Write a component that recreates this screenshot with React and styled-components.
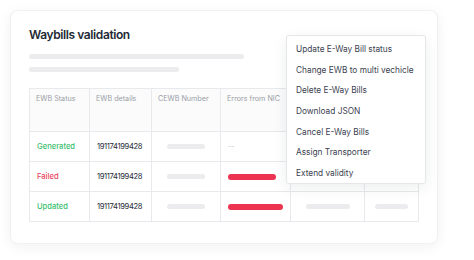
import React from 'react';
import styled, { createGlobalStyle } from 'styled-components';

const GlobalStyle = createGlobalStyle`
	body {
		margin: 0;
		background: #ffffff;
		font-family: Inter, "Noto Sans", sans-serif;
	}
`;

const Page = styled.div`
	padding: 10px 0 0 10px;
	width: 474px;
	height: 260px;
	box-sizing: border-box;
`;

const Card = styled.div`
	position: relative;
	width: 428px;
	height: 234px;
	box-sizing: border-box;
	border: 1px solid #f1f1f3;
	border-radius: 8px;
	background: #ffffff;
	box-shadow: 0 3px 14px rgba(30, 35, 50, 0.06);
	padding: 17px 0 0 18px;
`;

const Title = styled.h2`
	margin: 0;
	font-size: 12px;
	font-weight: 600;
	color: #232a36;
	letter-spacing: -0.4px;
	line-height: 14px;
`;

const Skeleton = styled.div`
	width: ${p => p.$w}px;
	height: ${p => p.$h || 5}px;
	border-radius: 3px;
	background: ${p => p.$color || '#ececee'};
	margin-top: ${p => p.$mt || 0}px;
`;

const Table = styled.div`
	margin-top: 16px;
	width: 389px;
	display: grid;
	grid-template-columns: 60px 62px 69px 70px 74px 54px;
	grid-template-rows: 43px 30px 30px 30px;
	border-top: 1px solid #e8e9ec;
	border-left: 1px solid #e8e9ec;
`;

const HeadCell = styled.div`
	background: #fbfbfc;
	border-right: 1px solid #e8e9ec;
	border-bottom: 1px solid #e8e9ec;
	padding: 5px 0 0 6px;
	font-size: 7.2px;
	color: #9a9ea6;
	white-space: nowrap;
	overflow: hidden;
`;

const Cell = styled.div`
	border-right: 1px solid #e8e9ec;
	border-bottom: 1px solid #e8e9ec;
	display: flex;
	align-items: center;
	justify-content: ${p => (p.$center ? 'center' : 'flex-start')};
	padding-left: ${p => (p.$center ? 0 : 7)}px;
	font-size: 7.6px;
	letter-spacing: ${p => (p.$tight ? '-0.35px' : '0')};
	color: ${p => p.$color || '#232a36'};
	font-weight: ${p => (p.$bold ? 500 : 400)};
	white-space: nowrap;
`;

const Dash = styled.span`
	color: #c4c6cc;
	font-size: 7px;
`;

const Menu = styled.div`
	position: absolute;
	left: 275px;
	top: 24px;
	width: 140px;
	height: 149px;
	box-sizing: border-box;
	background: #ffffff;
	border: 1px solid #e6e7ea;
	border-radius: 3px;
	box-shadow: 0 4px 14px rgba(30, 35, 50, 0.08);
	padding: 3px 0 0 9px;
	display: flex;
	flex-direction: column;
`;

const MenuItem = styled.div`
	height: 20.7px;
	display: flex;
	align-items: center;
	font-size: 8.3px;
	color: #3b4250;
	white-space: nowrap;
`;

const headers = ['EWB Status', 'EWB details', 'CEWB Number', 'Errors from NIC', '', ''];

const rows = [
	{ status: 'Generated', color: '#3cbf6d', error: null },
	{ status: 'Failed', color: '#e8445e', error: 48 },
	{ status: 'Updated', color: '#3cbf6d', error: 55, extra: true },
];

const menuItems = [
	'Update E-Way Bill status',
	'Change EWB to multi vechicle',
	'Delete E-Way Bills',
	'Download JSON',
	'Cancel E-Way Bills',
	'Assign Transporter',
	'Extend validity',
];

export default class App extends React.Component {
	render() {
		return (
			<>
				<GlobalStyle />
				<Page>
					<Card>
						<Title>Waybills validation</Title>
						<Skeleton $w={215} $mt={12} />
						<Skeleton $w={150} $mt={8} />
						<Table>
							{headers.map((h, i) => (
								<HeadCell key={i}>{h}</HeadCell>
							))}
							{rows.map(row => (
								<React.Fragment key={row.status}>
									<Cell $color={row.color} $bold>
										{row.status}
									</Cell>
									<Cell $tight>191174199428</Cell>
									<Cell $center>
										<Skeleton $w={38} />
									</Cell>
									<Cell>
										{row.error ? (
											<Skeleton $w={row.error} $h={6} $color="#ec3450" />
										) : (
											<Dash>--</Dash>
										)}
									</Cell>
									<Cell $center>{row.extra && <Skeleton $w={44} />}</Cell>
									<Cell $center>{row.extra && <Skeleton $w={33} />}</Cell>
								</React.Fragment>
							))}
						</Table>
						<Menu>
							{menuItems.map(item => (
								<MenuItem key={item}>{item}</MenuItem>
							))}
						</Menu>
					</Card>
				</Page>
			</>
		);
	}
}
